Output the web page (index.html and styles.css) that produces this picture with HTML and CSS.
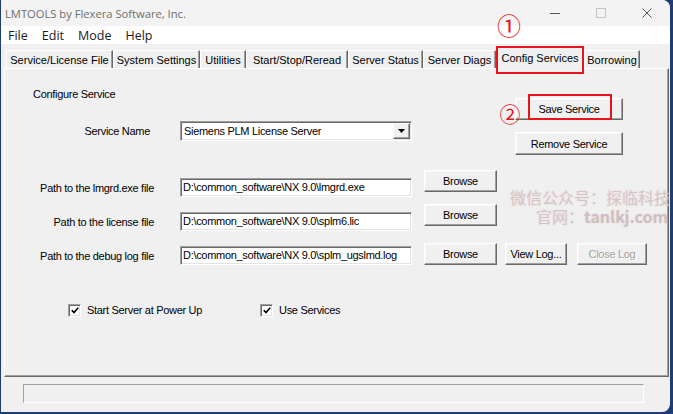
FILE: index.html
```html
<!DOCTYPE html>
<html>
<head>
<meta charset="utf-8">
<title>LMTOOLS</title>
<link rel="stylesheet" href="styles.css">
</head>
<body>
<div class="window">
  <div class="titlebar">
    <span class="title">LMTOOLS by Flexera Software, Inc.</span>
    <div class="controls">
      <div class="ctl"><svg width="10" height="10" viewBox="0 0 10 10"><line x1="0" y1="5.5" x2="10" y2="5.5" stroke="#555" stroke-width="1"/></svg></div>
      <div class="ctl"><svg width="10" height="10" viewBox="0 0 10 10"><rect x="0.5" y="0.5" width="9" height="9" fill="none" stroke="#c4c4c4" stroke-width="1"/></svg></div>
      <div class="ctl"><svg width="10" height="10" viewBox="0 0 10 10"><path d="M0.5 0.5 L9.5 9.5 M9.5 0.5 L0.5 9.5" stroke="#555" stroke-width="1"/></svg></div>
    </div>
  </div>
  <div class="menubar">
    <span>File</span><span>Edit</span><span>Mode</span><span>Help</span>
  </div>
  <div class="tabs">
    <div class="tab t1">Service/License File</div>
    <div class="tab t2">System Settings</div>
    <div class="tab t3">Utilities</div>
    <div class="tab t4">Start/Stop/Reread</div>
    <div class="tab t5">Server Status</div>
    <div class="tab t6">Server Diags</div>
    <div class="tab t7 active">Config Services</div>
    <div class="tab t8">Borrowing</div>
  </div>
  <div class="panel">
    <div class="top">
      <div class="top-left">
        <div class="section-title">Configure Service</div>
        <div class="field service">
          <div class="label">Service Name</div>
          <div class="combo">
            <span class="combo-text">Siemens PLM License Server</span>
            <span class="combo-btn"><svg width="7" height="4" viewBox="0 0 7 4"><polygon points="0,0 7,0 3.5,4" fill="#000"/></svg></span>
          </div>
        </div>
      </div>
      <div class="top-right">
        <button class="btn wide">Save Service</button>
        <button class="btn wide remove">Remove Service</button>
      </div>
    </div>
    <div class="path-row r1">
      <div class="label">Path to the lmgrd.exe file</div>
      <div class="input">D:\common_software\NX 9.0\lmgrd.exe</div>
      <button class="btn browse">Browse</button>
    </div>
    <div class="path-row r2">
      <div class="label">Path to the license file</div>
      <div class="input">D:\common_software\NX 9.0\splm6.lic</div>
      <button class="btn browse">Browse</button>
    </div>
    <div class="path-row r3">
      <div class="label">Path to the debug log file</div>
      <div class="input">D:\common_software\NX 9.0\splm_ugslmd.log</div>
      <button class="btn browse">Browse</button>
      <button class="btn viewlog">View Log...</button>
      <button class="btn closelog" disabled>Close Log</button>
    </div>
    <div class="checks">
      <label class="check first"><span class="cb"><svg width="8" height="7" viewBox="0 0 8 7"><polyline points="0.8,3.2 3,5.6 7.2,0.8" fill="none" stroke="#000" stroke-width="1.7"/></svg></span><span class="check-text">Start Server at Power Up</span></label>
      <label class="check"><span class="cb"><svg width="8" height="7" viewBox="0 0 8 7"><polyline points="0.8,3.2 3,5.6 7.2,0.8" fill="none" stroke="#000" stroke-width="1.7"/></svg></span><span class="check-text">Use Services</span></label>
    </div>
  </div>
  <div class="statusbar"><div class="status"></div></div>

  <div class="anno-box anno-tab"></div>
  <div class="anno-num num1">①</div>
  <div class="anno-box anno-save"></div>
  <div class="anno-num num2">②</div>
  <div class="watermark">
    <div class="wm1">微信公众号：探临科技</div>
    <div class="wm2">官网：<b>tanlkj.com</b></div>
  </div>
</div>
</body>
</html>
```
FILE: styles.css
```css
* { box-sizing: border-box; }
html, body { margin: 0; padding: 0; }
body {
  width: 673px;
  height: 414px;
  overflow: hidden;
  background: #1f3d72;
  font-family: "Liberation Sans", Arial, sans-serif;
  font-size: 11px;
  color: #000;
}
.window {
  position: relative;
  margin-left: 1px;
  width: 669px;
  height: 412px;
  background: #f0f0f0;
  border-radius: 0 8px 8px 0;
  overflow: hidden;
  display: flex;
  flex-direction: column;
}
.titlebar {
  height: 26px;
  flex: none;
  background: #f3f3f3;
  display: flex;
  align-items: center;
  padding-left: 4px;
  font-family: "Open Sans", sans-serif;
  font-size: 11.2px;
  color: #6f6f6f;
}
.controls {
  margin-left: auto;
  display: flex;
  height: 26px;
}
.ctl {
  width: 46px;
  display: flex;
  align-items: center;
  justify-content: center;
}
.menubar {
  height: 18px;
  flex: none;
  background: #fff;
  display: flex;
  align-items: center;
  gap: 14px;
  padding-left: 7px;
  font-family: "Open Sans", sans-serif;
  font-size: 12.5px;
  color: #1a1a1a;
}
.tabs {
  height: 24px;
  flex: none;
  display: flex;
  align-items: flex-end;
  padding-left: 5px;
}
.tab {
  height: 18px;
  display: flex;
  align-items: center;
  justify-content: center;
  background: #f0f0f0;
  border-top: 1px solid #fff;
  border-left: 1px solid #fff;
  border-right: 1px solid #696969;
  box-shadow: inset -1px 0 0 #a0a0a0;
  white-space: nowrap;
}
.tab.active {
  position: relative;
  z-index: 2;
  height: 22px;
  margin-bottom: -1px;
  padding-bottom: 2px;
}
.t1 { width: 107px; }
.t2 { width: 87px; }
.t3 { width: 46px; }
.t4 { width: 102px; }
.t5 { width: 75px; }
.t6 { width: 73px; }
.t7 { width: 88px; }
.t8 { width: 56px; }

.panel {
  flex: none;
  margin-left: 3px;
  width: 665px;
  height: 309px;
  border-top: 1px solid #fff;
  border-left: 1px solid #fff;
  border-right: 1px solid #696969;
  border-bottom: 1px solid #696969;
  box-shadow: inset -1px -1px 0 #a0a0a0;
  display: flex;
  flex-direction: column;
  letter-spacing: -0.3px;
}
.top {
  height: 101px;
  flex: none;
  display: flex;
}
.top-left { width: 510px; }
.section-title {
  margin-top: 18px;
  padding-left: 28px;
  line-height: 14px;
  height: 14px;
}
.field {
  display: flex;
  align-items: center;
}
.service { margin-top: 20px; }
.label {
  width: 149px;
  text-align: right;
  white-space: nowrap;
  flex: none;
}
.service .label { padding-right: 4px; }
.combo {
  margin-left: 26px;
  width: 232px;
  height: 20px;
  background: #fff;
  border: 1px solid;
  border-color: #a0a0a0 #fff #fff #a0a0a0;
  box-shadow: inset 1px 1px 0 #696969, inset -1px -1px 0 #e3e3e3;
  display: flex;
  align-items: center;
  padding: 1px 1px 1px 3px;
}
.combo-text { white-space: nowrap; }
.combo-btn {
  margin-left: auto;
  width: 17px;
  height: 16px;
  background: #f0f0f0;
  border: 1px solid;
  border-color: #fff #696969 #696969 #fff;
  box-shadow: inset -1px -1px 0 #a0a0a0;
  display: flex;
  align-items: center;
  justify-content: center;
}
.top-right {
  padding-top: 29px;
  display: flex;
  flex-direction: column;
}
.btn {
  font: inherit;
  letter-spacing: inherit;
  color: #000;
  background: #f0f0f0;
  border: 1px solid;
  border-color: #fff #696969 #696969 #fff;
  box-shadow: inset -1px -1px 0 #a0a0a0, inset 1px 1px 0 #f7f7f7;
  padding: 0;
  height: 22px;
  flex: none;
  white-space: nowrap;
}
.btn.wide { width: 108px; }
.btn.remove { margin-top: 12px; height: 23px; }

.path-row {
  flex: none;
  display: flex;
  align-items: flex-start;
}
.r1 { height: 34px; }
.r2 { height: 39px; }
.r3 { height: 22px; }
.path-row .label {
  line-height: 20px;
  margin-top: 8px;
}
.r3 .label { margin-top: 3px; }
.input {
  margin-left: 26px;
  margin-top: 8px;
  width: 232px;
  height: 19px;
  flex: none;
  background: #fff;
  border: 1px solid;
  border-color: #a0a0a0 #fff #fff #a0a0a0;
  box-shadow: inset 1px 1px 0 #696969, inset -1px -1px 0 #e3e3e3;
  padding-left: 2px;
  line-height: 17px;
  white-space: nowrap;
  overflow: hidden;
}
.r3 .input { margin-top: 3px; }
.btn.browse { margin-left: 12px; width: 73px; }
.btn.viewlog { margin-left: 8px; width: 62px; }
.btn.closelog {
  margin-left: 10px;
  width: 70px;
  color: #a0a0a0;
  text-shadow: 1px 1px 0 #fff;
}

.checks {
  flex: none;
  margin-top: 38px;
  padding-left: 63px;
  display: flex;
  align-items: center;
  height: 14px;
}
.check {
  display: flex;
  align-items: center;
}
.check.first { width: 192px; }
.cb {
  width: 13px;
  height: 13px;
  flex: none;
  background: #fff;
  border: 1px solid;
  border-color: #a0a0a0 #fff #fff #a0a0a0;
  box-shadow: inset 1px 1px 0 #696969, inset -1px -1px 0 #e3e3e3;
  display: flex;
  align-items: center;
  justify-content: center;
}
.check-text { margin-left: 6px; }

.statusbar {
  flex: none;
  padding: 7px 0 0 22px;
}
.status {
  width: 621px;
  height: 19px;
  border: 1px solid;
  border-color: #a0a0a0 #fff #fff #a0a0a0;
}

.anno-box {
  position: absolute;
  border: 2px solid #e8141c;
  z-index: 5;
}
.anno-tab { left: 495px; top: 46px; width: 88px; height: 28px; }
.anno-save { left: 527px; top: 94px; width: 84px; height: 26px; }
.anno-num {
  position: absolute;
  z-index: 5;
  color: #e8141c;
  font-family: "Noto Sans CJK SC", "DejaVu Sans", sans-serif;
  line-height: 1;
  display: flex;
  align-items: center;
  justify-content: center;
}
.num1 { left: 495px; top: 12px; width: 26px; height: 26px; font-size: 24px; }
.num2 { left: 497px; top: 101px; width: 24px; height: 24px; font-size: 21px; }
.watermark {
  position: absolute;
  z-index: 4;
  left: 509px;
  top: 188px;
  font-family: "Noto Sans CJK SC", sans-serif;
  font-size: 16px;
  line-height: 19px;
  white-space: nowrap;
  color: #d4c6c7;
  text-shadow: 0 0 2px rgba(225, 160, 160, 0.3);
}
.wm2 { padding-left: 26px; }
.watermark b { font-weight: 700; color: #cebfc0; }
```
